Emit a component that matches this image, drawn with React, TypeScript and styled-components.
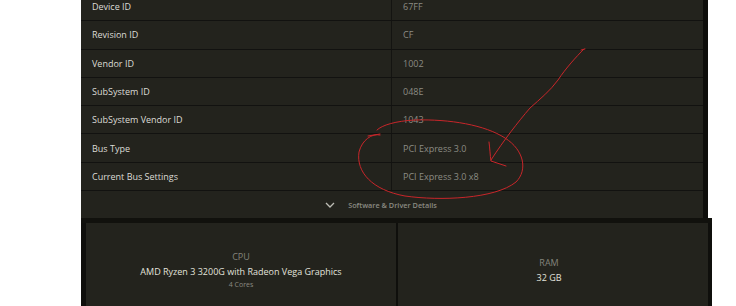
import React from "react";
import styled, { createGlobalStyle } from "styled-components";

const Global = createGlobalStyle`
  html, body { margin: 0; padding: 0; background: #ffffff; }
  body { font-family: "Open Sans", "Noto Sans", sans-serif; }
`;

const Page = styled.div`
  position: relative;
  width: 736px;
  height: 306px;
  overflow: hidden;
  background: #ffffff;
`;

const Panel = styled.div`
  margin-left: 81px;
  margin-top: -7px;
  width: 622px;
  background: #23231d;
  border-right: 5px solid #0e0e0b;
`;

const Row = styled.div`
  display: grid;
  grid-template-columns: 311px 1fr;
  height: 28.3px;
  box-sizing: border-box;
  border-bottom: 1px solid #121210;
`;

const Label = styled.div`
  display: flex;
  align-items: center;
  padding-left: 11px;
  font-size: 9px;
  color: #dcdcd6;
  border-right: 1px solid #141411;
`;

const Value = styled.div`
  display: flex;
  align-items: center;
  padding-left: 11px;
  font-size: 9px;
  color: #8c8c84;
`;

const Expander = styled.div`
  display: flex;
  align-items: center;
  justify-content: center;
  gap: 13px;
  height: 27px;
  padding-right: 22px;
  font-size: 7.3px;
  font-weight: 600;
  color: #8a8a82;
`;

const Band = styled.div`
  height: 5px;
  width: 631px;
  margin-left: 81px;
  background: #11110d;
`;

const Cards = styled.div`
  display: grid;
  grid-template-columns: 310px 310px;
  gap: 2px;
  margin-left: 81px;
  width: 622px;
  height: 94px;
  background: #0f0f0c;
  border-left: 5px solid #0f0f0c;
  border-right: 4px solid #0f0f0c;
`;

const Card = styled.div<{ $shift?: number }>`
  display: flex;
  flex-direction: column;
  align-items: center;
  justify-content: center;
  background: #23231d;
  padding-right: ${(p) => p.$shift ?? 0}px;
`;

const CardTitle = styled.div`
  font-size: 9px;
  color: #84847c;
  line-height: 14px;
`;

const CardMain = styled.div`
  font-size: 9px;
  color: #e2e2dc;
  line-height: 15px;
`;

const CardSub = styled.div`
  font-size: 7px;
  color: #8a8a82;
  line-height: 11px;
`;

const Overlay = styled.svg`
  position: absolute;
  left: 0;
  top: 0;
  pointer-events: none;
`;

const rows: [string, string][] = [
  ["Device ID", "67FF"],
  ["Revision ID", "CF"],
  ["Vendor ID", "1002"],
  ["SubSystem ID", "048E"],
  ["SubSystem Vendor ID", "1043"],
  ["Bus Type", "PCI Express 3.0"],
  ["Current Bus Settings", "PCI Express 3.0 x8"],
];

export default function App() {
  return (
    <>
      <Global />
      <Page>
        <Panel>
          {rows.map(([k, v]) => (
            <Row key={k}>
              <Label>{k}</Label>
              <Value>{v}</Value>
            </Row>
          ))}
          <Expander>
            <svg width="10" height="6" viewBox="0 0 10 6">
              <path d="M1 1 L5 5 L9 1" fill="none" stroke="#bdbdb5" strokeWidth="1.3" />
            </svg>
            <span>Software &amp; Driver Details</span>
          </Expander>
        </Panel>
        <Band />
        <Cards>
          <Card>
            <CardTitle>CPU</CardTitle>
            <CardMain>AMD Ryzen 3 3200G with Radeon Vega Graphics</CardMain>
            <CardSub>4 Cores</CardSub>
          </Card>
          <Card $shift={8}>
            <CardTitle>RAM</CardTitle>
            <CardMain>32 GB</CardMain>
          </Card>
        </Cards>
        <Overlay width="736" height="306" viewBox="0 0 736 306">
          <g fill="none" stroke="#c8262a" strokeWidth="1" strokeLinecap="round" strokeLinejoin="round">
            <path d="M581 50 L585 49 M584 49 C576 57 566 68 558 80 C550 91 540 99 530 108 C518 122 504 140 491 160" />
            <path d="M489 142 C490 149 490 155 491 161 L506 166" />
            <path d="M380 135 C372 133 362 140 359 152 C356 172 372 190 405 196 C440 201 495 199 516 182 C528 170 524 150 505 138 C485 125 450 119 415 120 C396 121 382 125 377 130" />
            <path d="M368 136 L380 134" />
          </g>
        </Overlay>
      </Page>
    </>
  );
}
